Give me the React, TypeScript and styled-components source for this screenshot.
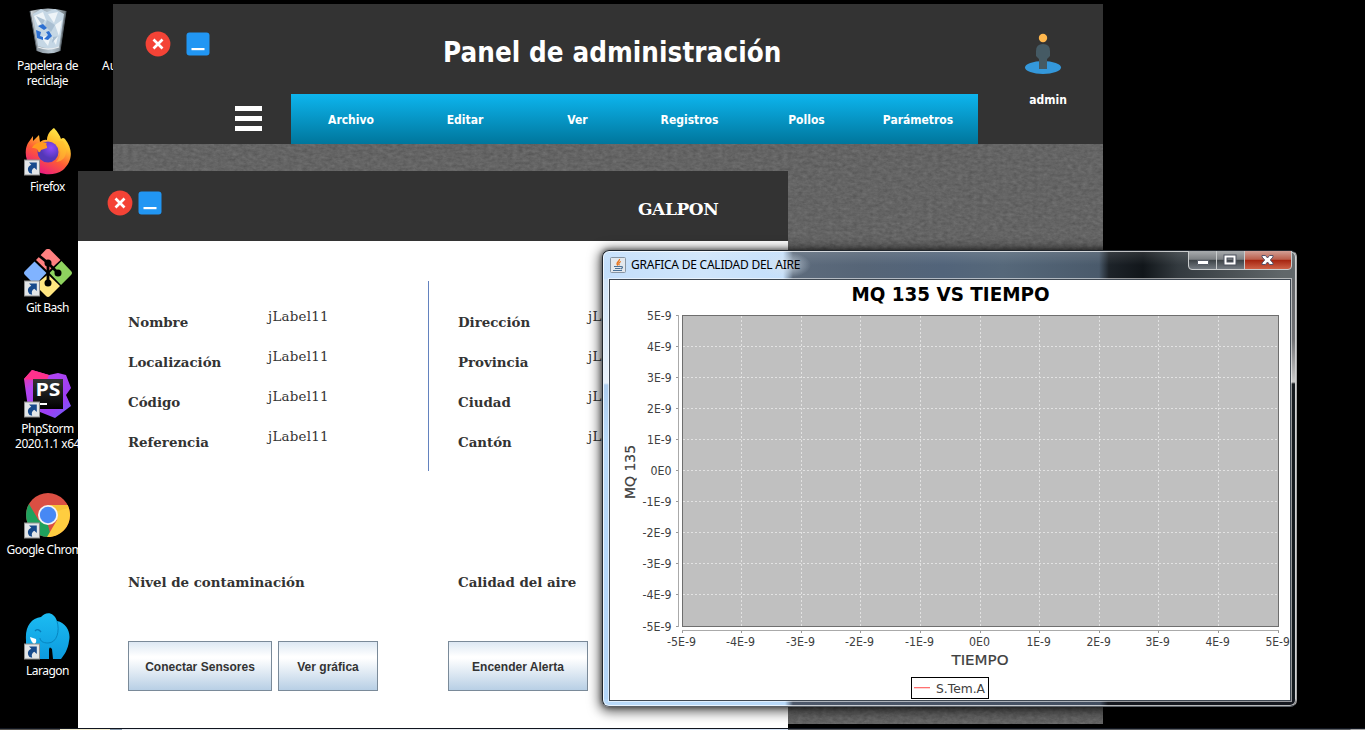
import React from "react";
import styled, { createGlobalStyle } from "styled-components";

const Global = createGlobalStyle`
  * { box-sizing: border-box; }
  html, body { margin: 0; background: #000; overflow: hidden; }
`;

const ui = `"Noto Sans", "Open Sans", sans-serif`;
const tahoma = `"DejaVu Sans Condensed", "DejaVu Sans", sans-serif`;
const chartFont = `"DejaVu Sans", sans-serif`;
const serif = `"DejaVu Serif", serif`;

const Desktop = styled.main`
  position: relative;
  width: 1365px;
  height: 730px;
  background: #000;
  overflow: hidden;
`;
const IconColumn = styled.div`
  display: flex;
  flex-direction: column;
  width: 95px;
  padding-top: 7px;
`;
const Shortcut = styled.div`
  height: 121px;
  display: flex;
  flex-direction: column;
  align-items: center;
`;
const IconBox = styled.svg`
  width: 48px;
  height: 48px;
  flex: none;
`;
const ShortcutLabel = styled.span`
  margin-top: 3px;
  font: 12px/15px ${ui};
  letter-spacing: -0.5px;
  color: #fff;
  text-align: center;
  white-space: pre;
`;
const HiddenNeighbour = styled.span`
  position: absolute;
  left: 102px;
  top: 58px;
  font: 12px/15px ${ui};
  color: #fff;
`;

const AdminWindow = styled.section`
  position: absolute;
  left: 113px;
  top: 4px;
  width: 990px;
  height: 720px;
  display: flex;
  flex-direction: column;
  background: #646464;
`;
const AdminHeader = styled.header`
  height: 140px;
  flex: none;
  background: #333;
  display: flex;
  flex-direction: column;
`;
const AdminTop = styled.div`
  height: 90px;
  display: flex;
  padding-left: 32px;
`;
const WindowButtons = styled.div<{ $gap: number; $top: number }>`
  display: flex;
  gap: ${(p) => p.$gap}px;
  padding-top: ${(p) => p.$top}px;
`;
const AdminTitle = styled.h1`
  margin: 30px 0 0 232px;
  width: 340px;
  flex: none;
  font: bold 27.5px/36px ${tahoma};
  letter-spacing: 0.08px;
  white-space: nowrap;
  color: #fff;
`;
const AdminUser = styled.div`
  width: 80px;
  margin-left: 220px;
  padding-top: 29px;
  display: flex;
  flex-direction: column;
  align-items: center;
  gap: 16px;
`;
const UserPin = styled.svg`
  width: 38px;
  height: 42px;
  flex: none;
`;
const UserName = styled.span`
  font: bold 12px/18px ${tahoma};
  color: #fff;
  margin-left: 10px;
`;
const AdminNav = styled.div`
  display: flex;
  height: 50px;
`;
const MenuToggle = styled.div`
  width: 178px;
  padding: 12px 0 0 122px;
  display: flex;
  flex-direction: column;
  gap: 5px;
`;
const ToggleBar = styled.i`
  width: 27px;
  height: 5px;
  background: #fff;
`;
const MenuBar = styled.nav`
  width: 687px;
  height: 50px;
  display: flex;
  background: linear-gradient(#0db5ee, #00769c);
`;
const MenuItem = styled.a<{ $w: number }>`
  width: ${(p) => p.$w}px;
  text-align: center;
  font: bold 12px/52px ${tahoma};
  color: #fff;
`;
const Texture = styled.svg`
  width: 990px;
  height: 580px;
  display: block;
`;

const ShedWindow = styled.section`
  position: absolute;
  left: 78px;
  top: 171px;
  width: 710px;
  height: 557px;
  background: #fff;
`;
const ShedHeader = styled.header`
  height: 70px;
  background: #333;
  display: flex;
  padding-left: 29px;
`;
const ShedTitle = styled.h2`
  margin: 25px 0 0 475px;
  font: bold 17px/26px ${serif};
  letter-spacing: -0.4px;
  color: #fff;
`;
const Details = styled.div`
  display: flex;
  height: 230px;
  padding: 40px 0 0 50px;
`;
const FieldGroup = styled.div<{ $w: number }>`
  width: ${(p) => p.$w}px;
  padding-top: 25px;
  display: flex;
  flex-direction: column;
`;
const Field = styled.div<{ $label: number }>`
  height: 40px;
  display: grid;
  grid-template-columns: ${(p) => p.$label}px 1fr;
`;
const FieldName = styled.b`
  padding-top: 5px;
  font: bold 13.4px/22px ${serif};
  letter-spacing: -0.02px;
  color: #333;
`;
const FieldValue = styled.span`
  font: 13.4px/22px ${serif};
  letter-spacing: 0.25px;
  color: #333;
`;
const Divider = styled.div`
  width: 1px;
  height: 190px;
  margin-right: 29px;
  background: #6382bf;
`;
const Readings = styled.div`
  display: grid;
  grid-template-columns: 330px 1fr;
  padding: 95px 0 0 50px;
`;
const Actions = styled.div`
  display: flex;
  padding: 48px 0 0 50px;
`;
const ActionButton = styled.button<{ $w: number; $ml?: number }>`
  width: ${(p) => p.$w}px;
  height: 50px;
  margin-left: ${(p) => p.$ml ?? 0}px;
  padding: 2px 0 0;
  border: 1px solid #7a8a99;
  background: linear-gradient(#dde8f3 0%, #fff 30%, #fff 34%, #b8cfe5 100%);
  font: bold 12px/20px "Liberation Sans", sans-serif;
  letter-spacing: 0.02px;
  color: #333;
`;

const ChartWindow = styled.section`
  position: absolute;
  left: 602px;
  top: 250px;
  width: 695px;
  height: 457px;
  border-radius: 7px;
  border: 1px solid #20262d;
  border-right-color: #aaa;
  border-bottom-color: #5b6168;
  padding: 0 5px 5px 6px;
  box-shadow: 0 2px 12px 3px rgba(0, 0, 0, 0.6), 0 0 4px 1px rgba(0, 0, 0, 0.4),
    inset 0 0 0 1px rgba(255, 255, 255, 0.7);
  background:
    linear-gradient(#646669 0, #6f7073 60px, #c9c9c9 102px, #c9c9c9 103px, #14191d 105px, #11181c 100%)
      right 1px top 28px / 5px 420px no-repeat,
    linear-gradient(#d0e4f8 0, #e8f1fa 104px, #aecdee 106px, #b9dafa 160px, #b3d5f8 100%)
      1px 28px / 5px 420px no-repeat,
    linear-gradient(to right, #b9dafa 0, #b9dafa 182px, #4d586a 190px, #424e60 497px, #15181f 505px, #15181f 100%)
      0 100% / 100% 7px no-repeat,
    radial-gradient(ellipse 26px 13px at 182px 14px, rgba(215, 228, 240, 0.85), rgba(215, 228, 240, 0)),
    linear-gradient(rgba(255, 255, 255, 0.12), rgba(255, 255, 255, 0) 50%) 0 0 / 100% 28px no-repeat,
    linear-gradient(to right, #c4dffb 0, #cfe5fb 100px, #c4dffb 180px, #5d6b7c 190px, #566577 260px, #52647a 340px,
      #56687a 400px, #4a5a6b 496px, #1d2329 506px, #11161a 540px, #333a3f 575px, #61676a 680px);
`;
const TitleBar = styled.header`
  height: 28px;
  display: flex;
  align-items: flex-start;
`;
const JavaIcon = styled.svg`
  width: 16px;
  height: 16px;
  margin: 6px 5px 0 1px;
`;
const WindowTitle = styled.span`
  flex: 1;
  margin-top: 4px;
  font: 12px/20px ${ui};
  letter-spacing: -0.23px;
  color: #000;
`;
const Controls = styled.svg`
  width: 104px;
  height: 19px;
  margin: 0 -1px 0 0;
  display: block;
`;
const Client = styled.div`
  width: 682px;
  height: 422px;
  border: 1px solid #3f4852;
  box-shadow: 0 0 0 1px rgba(255, 255, 255, 0.55);
  background: #fff;
`;
const ChartSvg = styled.svg`
  display: block;
  width: 680px;
  height: 420px;
`;

const Taskbar = styled.div`
  position: absolute;
  left: 0;
  bottom: 0;
  width: 1365px;
  height: 2px;
  border-top: 1px solid #10151f;
  background: linear-gradient(to right, #55524e 0 60px, #f1ecd0 60px 110px, #8798aa 110px 122px, #e9edf2 122px 550px,
    #d5e3f5 550px 788px, #5d5f63 788px 1350px, #a5a5a5 1351px);
`;

const ShortcutArrow = () => (
  <g>
    <rect x=".5" y="32" width="15" height="15" fill="#e3e6e8" stroke="#8f8f8f" />
    <path d="M5 34.500H12.800V42L10.300 39.800C8 41 7.200 43 8.200 45.800L5.500 45C3 42 3.500 38.500 7.300 36.800Z" fill="#174a8c" />
  </g>
);

const CloseIcon = () => (
  <svg width="26" height="26" viewBox="0 0 26 26">
    <circle cx="13" cy="13" r="12.400" fill="#f44336" />
    <path d="M8.500 8.500l9 9M17.500 8.500l-9 9" stroke="#fff" strokeWidth="2.700" />
  </svg>
);
const MinimizeIcon = () => (
  <svg width="26" height="26" viewBox="0 0 26 26">
    <rect x="1.500" y="1.500" width="23" height="23" rx="3" fill="#2196f3" />
    <rect x="6.500" y="17" width="13" height="2.200" fill="#fff" />
  </svg>
);

const RecycleBin = () => (
  <IconBox viewBox="0 -1 48 48">
    <defs>
      <linearGradient id="bin">
        <stop offset="0" stopColor="#d9dde0" />
        <stop offset=".25" stopColor="#8f9ba4" />
        <stop offset=".6" stopColor="#b9c8d3" />
        <stop offset="1" stopColor="#6e777d" />
      </linearGradient>
    </defs>
    <path d="M6 3Q24-2 42 3L36 43Q24 48 13 43Z" fill="url(#bin)" />
    <path d="M9 6L17 1L23 4L31 1L40 6L35 39Q24 42 14 38Z" fill="#c5d7e5" />
    <path d="M10 8L19 4L22 12L14 18ZM24 6L34 4L30 15ZM31 17L38 12L35 28ZM17 29L27 27L24 38ZM28 30L34 28L32 37Z" fill="#eef4f8" />
    <path d="M12 8L21 12L18 17ZM23 12L31 17L27 24L21 18ZM34 28L28 35L29 29Z" fill="#a9bfd2" />
    <path d="M14 18L19 16L23 20L20 22L17 20ZM12 22L17 24L16 28L19 29V32L13 30ZM22 24L25 23L28 28L24 32L20 31L24 27Z" fill="#2c6fd1" />
    <path d="M14 39Q24 43 35 39" stroke="#e9edf0" fill="none" strokeWidth="1.300" />
    <path d="M6 3L13 43M42 3L36 43" stroke="#59636b" fill="none" />
  </IconBox>
);
const FirefoxIcon = () => (
  <IconBox viewBox="0 0 48 48">
    <defs>
      <linearGradient id="ff1" x1=".8" y1="0" x2=".25" y2="1">
        <stop offset="0" stopColor="#fff44f" />
        <stop offset=".3" stopColor="#ffc02e" />
        <stop offset=".6" stopColor="#ff5c35" />
        <stop offset="1" stopColor="#e6108b" />
      </linearGradient>
      <radialGradient id="ff2" cx=".65" cy=".3">
        <stop offset="0" stopColor="#8f4bfb" />
        <stop offset="1" stopColor="#5437b8" />
      </radialGradient>
    </defs>
    <path d="M30 0C34 4 36 8 37 11Q39 9 41 11C50 22 48 34 39 42C29 49 15 47 7 39C0 31 1 20 4 15L9 8V13L15 7L16 14Q20 11 23 12C23 6 27 2 30 0Z" fill="url(#ff1)" />
    <circle cx="24" cy="24" r="10.500" fill="url(#ff2)" />
    <path d="M8 20C10 15 17 13 23 15C21 16 24 19 23 20L17 22C16 25 14 25 14 22C12 20 10 20 8 20Z" fill="#ff9a1f" />
    <path d="M30 14C38 18 38 29 32 34C42 33 45 24 39 13Z" fill="#ffbd2f" opacity=".6" />
    <ShortcutArrow />
  </IconBox>
);
const GitIcon = () => (
  <IconBox viewBox="0 0 48 48">
    <path d="M22 .5Q24-1 26 .5L36.500 11L24 22.500L12 11Z" fill="#ff8080" />
    <path d="M37.500 12L47 22Q49 24 47 26L37 36L25.500 24Z" fill="#8fd35f" />
    <path d="M24 25.500L36 37L26 47Q24 49 22 47L11 36Z" fill="#ffe680" />
    <path d="M10.500 12.500L22.500 24L11 36L1 26Q-1 24 1 22Z" fill="#80b3ff" />
    <path d="M13 5L24 14L34 24M24 14V34" stroke="#000" strokeWidth="2.800" fill="none" />
    <circle cx="24" cy="14" r="3.500" />
    <circle cx="34" cy="24" r="3.500" />
    <circle cx="24" cy="34" r="3.500" />
    <ShortcutArrow />
  </IconBox>
);
const PhpStormIcon = () => (
  <IconBox viewBox="0 0 48 48">
    <defs>
      <linearGradient id="ps1" x2=".8" y2="1">
        <stop offset="0" stopColor="#ff318c" />
        <stop offset=".3" stopColor="#b345f1" />
        <stop offset=".8" stopColor="#9b3ff5" />
        <stop offset="1" stopColor="#765af8" />
      </linearGradient>
      <linearGradient id="ps2" x2="0" y2="1">
        <stop offset="0" stopColor="#343434" />
        <stop offset="1" stopColor="#000" />
      </linearGradient>
    </defs>
    <path d="M0 9L8 0L25 5L34 3L42 5L47 18L42 25L47 36L31 48L16 42L5 45Z" fill="url(#ps1)" />
    <path d="M0 9L8 0L25 5L23 10H9Z" fill="#ff318c" />
    <rect x="9" y="9" width="30" height="30" fill="url(#ps2)" />
    <text x="11.500" y="25.700" fontFamily="Open Sans, sans-serif" fontWeight="bold" fontSize="18" textLength="25" lengthAdjust="spacingAndGlyphs" fill="#fff">PS</text>
    <rect x="12" y="33" width="11" height="2" fill="#fff" />
    <ShortcutArrow />
  </IconBox>
);
const ChromeIcon = () => (
  <IconBox viewBox="0 -1 48 48">
    <circle cx="24" cy="23" r="22" fill="#db4f43" />
    <path d="M5 12L14.500 28L24 33L27 44.800A22 22 0 0 1 5 12Z" fill="#1fa15d" />
    <path d="M24 13H43.600A22 22 0 0 1 23 45L33 28Z" fill="#ffcd40" />
    <path d="M24 13H43.600L44 16L30 20Z" fill="#e9ab24" opacity=".35" />
    <circle cx="24" cy="23" r="10" fill="#f4f4f4" />
    <circle cx="24" cy="23" r="8.200" fill="#4788f4" />
    <g transform="translate(0 -1)">
      <ShortcutArrow />
    </g>
  </IconBox>
);
const LaragonIcon = () => (
  <IconBox viewBox="0 0 48 48">
    <defs>
      <linearGradient id="el" x2="0" y2="1">
        <stop offset="0" stopColor="#1cbcf2" />
        <stop offset="1" stopColor="#0c9ade" />
      </linearGradient>
    </defs>
    <path d="M2 28C1 15 7 6 17 5C22-1 30 0 33 9C43 11 47 21 45 29C44 38 40 43 37 47H29L28 37Q25 33 25 39V47H13L2 43Z" fill="url(#el)" />
    <path d="M33 9C36 19 33 31 24 31C19 31 16 29 16 26" fill="none" stroke="#0785c0" strokeWidth="1" />
    <path d="M11 19Q14 16 17 20" fill="none" stroke="#087cb8" strokeWidth="1.300" />
    <path d="M6 25L12 27Q13 31 10 32Q7 30 6 25Z" fill="#fff" />
    <ShortcutArrow />
  </IconBox>
);

const shortcuts: [React.FC, string][] = [
  [RecycleBin, "Papelera de\nreciclaje"],
  [FirefoxIcon, "Firefox"],
  [GitIcon, "Git Bash"],
  [PhpStormIcon, "PhpStorm\n2020.1.1 x64"],
  [ChromeIcon, "Google Chrome"],
  [LaragonIcon, "Laragon"],
];
const menu: [string, number][] = [
  ["Archivo", 120],
  ["Editar", 108],
  ["Ver", 117],
  ["Registros", 107],
  ["Pollos", 127],
  ["Parámetros", 96],
];

const ticks = [-5, -4, -3, -2, -1, 0, 1, 2, 3, 4, 5];
const tickName = (n: number) => (n === 0 ? "0E0" : `${n}E-9`);

const Chart = () => {
  const px = (n: number) => Math.floor(72.01 + (n + 5) * 59.6) + 0.5;
  const py = (n: number) => Math.floor(35.01 + (5 - n) * 31.1) + 0.5;
  const width = (n: number) => (n === 0 ? 21 : n < 0 ? 29 : 24.4);
  return (
    <ChartSvg viewBox="0 0 680 420" fontFamily={chartFont}>
      <text x="241.500" y="21" fontSize="20" fontWeight="bold" textLength="198" lengthAdjust="spacingAndGlyphs">MQ 135 VS TIEMPO</text>
      <rect x="72.500" y="35.500" width="596" height="311" fill="#c0c0c0" stroke="#6e6e6e" />
      {ticks.slice(1, -1).map((n) => (
        <g key={n} stroke="#e2e2e2" strokeDasharray="2 2">
          <path d={`M${px(n)} 36V346`} />
          <path d={`M73 ${py(n)}H668`} />
        </g>
      ))}
      <path d="M68.500 35V347M72 350.500H669" stroke="#aaa" />
      {ticks.map((n) => (
        <g key={n} fontSize="12" fill="#404040">
          <path d={`M66 ${py(n)}H68M${px(n)} 351V353`} stroke="#999" />
          <text x={61.5 - width(n)} y={py(n) + 4.5} textLength={width(n)} lengthAdjust="spacingAndGlyphs">{tickName(n)}</text>
          <text x={px(n) - 0.9 - width(n) / 2} y="366" textLength={width(n)} lengthAdjust="spacingAndGlyphs">{tickName(n)}</text>
        </g>
      ))}
      <g fontSize="14" fill="#404040" stroke="#404040" strokeWidth=".2">
        <text transform="translate(25 219) rotate(-90)" textLength="54" lengthAdjust="spacingAndGlyphs">MQ 135</text>
        <text x="341.500" y="385" textLength="57" lengthAdjust="spacingAndGlyphs">TIEMPO</text>
      </g>
      <rect x="301.500" y="397.500" width="77" height="21" fill="#fff" stroke="#000" />
      <rect x="304" y="407" width="16" height="1.300" fill="#ff7070" />
      <text x="326" y="413" fontSize="12" fill="#404040" textLength="49" lengthAdjust="spacingAndGlyphs">S.Tem.A</text>
    </ChartSvg>
  );
};

export default function App() {
  return (
    <Desktop>
      <Global />
      <IconColumn>
        {shortcuts.map(([Icon, label]) => (
          <Shortcut key={label}>
            <Icon />
            <ShortcutLabel>{label}</ShortcutLabel>
          </Shortcut>
        ))}
      </IconColumn>
      <HiddenNeighbour>Au</HiddenNeighbour>

      <AdminWindow>
        <AdminHeader>
          <AdminTop>
            <WindowButtons $gap={14} $top={27}>
              <CloseIcon />
              <MinimizeIcon />
            </WindowButtons>
            <AdminTitle>Panel de administración</AdminTitle>
            <AdminUser>
              <UserPin viewBox="0 0 38 42">
                <ellipse cx="19" cy="34.500" rx="18" ry="6.500" fill="#3498db" />
                <path d="M12 18Q12 11 19 11Q26 11 26 18V23L23 26V36H15V26L12 23Z" fill="#455a64" />
                <circle cx="19" cy="5" r="4.200" fill="#ffb74d" />
              </UserPin>
              <UserName>admin</UserName>
            </AdminUser>
          </AdminTop>
          <AdminNav>
            <MenuToggle>
              <ToggleBar />
              <ToggleBar />
              <ToggleBar />
            </MenuToggle>
            <MenuBar>
              {menu.map(([name, w]) => (
                <MenuItem key={name} $w={w}>{name}</MenuItem>
              ))}
            </MenuBar>
          </AdminNav>
        </AdminHeader>
        <Texture viewBox="0 0 990 580">
          <filter id="linen" x="0" y="0" width="100%" height="100%" colorInterpolationFilters="sRGB">
            <feTurbulence type="fractalNoise" baseFrequency="0.2 0.33" numOctaves="4" seed="6" />
            <feColorMatrix values=".11 .06 0 0 .308  .11 .06 0 0 .308  .11 .06 0 0 .308  0 0 0 0 1" />
          </filter>
          <rect width="990" height="580" filter="url(#linen)" />
        </Texture>
      </AdminWindow>

      <ShedWindow>
        <ShedHeader>
          <WindowButtons $gap={4} $top={19}>
            <CloseIcon />
            <MinimizeIcon />
          </WindowButtons>
          <ShedTitle>GALPON</ShedTitle>
        </ShedHeader>
        <Details>
          <FieldGroup $w={300}>
            {["Nombre", "Localización", "Código", "Referencia"].map((f) => (
              <Field key={f} $label={140}>
                <FieldName>{f}</FieldName>
                <FieldValue>jLabel11</FieldValue>
              </Field>
            ))}
          </FieldGroup>
          <Divider />
          <FieldGroup $w={280}>
            {["Dirección", "Provincia", "Ciudad", "Cantón"].map((f) => (
              <Field key={f} $label={130}>
                <FieldName>{f}</FieldName>
                <FieldValue>jLabel11</FieldValue>
              </Field>
            ))}
          </FieldGroup>
        </Details>
        <Readings>
          <FieldName>Nivel de contaminación</FieldName>
          <FieldName>Calidad del aire</FieldName>
        </Readings>
        <Actions>
          <ActionButton $w={144}>Conectar Sensores</ActionButton>
          <ActionButton $w={100} $ml={6}>Ver gráfica</ActionButton>
          <ActionButton $w={140} $ml={70}>Encender Alerta</ActionButton>
        </Actions>
      </ShedWindow>

      <ChartWindow>
        <TitleBar>
          <JavaIcon viewBox="0 0 16 16">
            <rect x=".5" y=".5" width="15" height="15" rx="1" fill="#e3e8ed" stroke="#8795a3" />
            <path d="M9.500 2C10 4.500 5 5 7.800 8.500M10.800 4.500Q7.500 6 9.500 8.300" stroke="#e8741c" strokeWidth="1.300" fill="none" />
            <path d="M4 9.500H11M5 11.500H10.500M3 13.500H12M11 9.500Q14 9.500 11 12" stroke="#4b7196" strokeWidth="1.200" fill="none" />
          </JavaIcon>
          <WindowTitle>GRAFICA DE CALIDAD DEL AIRE</WindowTitle>
          <Controls viewBox="0 0 104 19">
            <defs>
              <linearGradient id="cg" x2="0" y2="1">
                <stop offset="0" stopColor="#a9acae" />
                <stop offset=".45" stopColor="#7c8083" />
                <stop offset=".5" stopColor="#3d4347" />
                <stop offset="1" stopColor="#777e85" />
              </linearGradient>
              <linearGradient id="cr" x2="0" y2="1">
                <stop offset="0" stopColor="#d3a096" />
                <stop offset=".45" stopColor="#bb5f4c" />
                <stop offset=".5" stopColor="#a62510" />
                <stop offset="1" stopColor="#d0654a" />
              </linearGradient>
            </defs>
            <path d="M.5 0H56V18.500H4Q.5 18.500 .5 15Z" fill="url(#cg)" />
            <path d="M56 0H103.500V15Q103.500 18.500 100 18.500H56Z" fill="url(#cr)" />
            <path d="M.5 0V15Q.5 18.500 4 18.500H100Q103.500 18.500 103.500 15V0M28.500 0V18M56.500 0V18" fill="none" stroke="#c9cccd" />
            <rect x="9.500" y="9.500" width="11" height="4" rx=".5" fill="#fff" stroke="#555b66" />
            <path d="M37.500 5.500H46.500V12.500H37.500Z" fill="none" stroke="#4c525f" strokeWidth="4" />
            <path d="M37.500 5.500H46.500V12.500H37.500Z" fill="none" stroke="#fff" strokeWidth="2" />
            <path d="M74 4.500H77.500L79.500 7L81.500 4.500H85V6L82.300 9L85 12V13.500H81.500L79.500 11L77.500 13.500H74V12L76.700 9L74 6Z" fill="#fff" stroke="#55526a" />
          </Controls>
        </TitleBar>
        <Client>
          <Chart />
        </Client>
      </ChartWindow>
      <Taskbar />
    </Desktop>
  );
}
